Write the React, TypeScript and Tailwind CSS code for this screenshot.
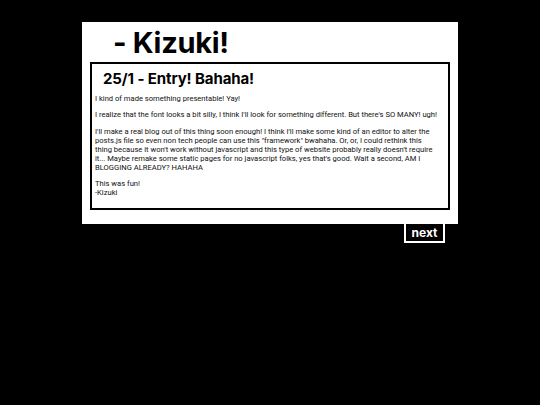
export default function App() {
  return (
    <div className="min-h-[405px] bg-black pt-[22px]" style={{ fontFamily: 'Roboto, "Liberation Sans", sans-serif' }}>
      <div className="mx-auto w-[376px]">
        <main className="bg-white pb-[14px]">
          <header className="flex h-[40px] items-center pl-[31px] pt-[1px]">
            <h1 className="font-['Inter',sans-serif] text-[29px] font-bold leading-none tracking-[-0.3px] text-black">- Kizuki!</h1>
          </header>
          <article className="ml-[8px] w-[360px] border-2 border-black pl-[3px] pr-[8px] pb-[11px] pt-[4px] text-black">
            <h2 className="pl-[8px] font-['Inter',sans-serif] text-[15px] font-bold leading-[22px] tracking-[-0.1px]">25/1 - Entry! Bahaha!</h2>
            <div className="mt-[4px] flex flex-col gap-[7px] text-[7.6px] leading-[9px] text-[#111]">
              <p>I kind of made something presentable! Yay!</p>
              <p>I realize that the font looks a bit silly, I think I'll look for something different. But there's SO MANY! ugh!</p>
              <p className="mt-[1px]">
                I'll make a real blog out of this thing soon enough! I think I'll make some kind of an editor to alter the posts.js file so even non tech people can use this "framework" bwahaha. Or, or, I could rethink this thing because it won't work without javascript and this type of website probably really doesn't require it... Maybe remake some static pages for no javascript folks, yes that's good. Wait a second, AM I BLOGGING ALREADY? HAHAHA
              </p>
              <p>
                This was fun!
                <br />
                -Kizuki
              </p>
            </div>
          </article>
        </main>
        <div className="flex justify-end pr-[13px]">
          <button className="h-[19px] w-[41px] border-2 border-t-0 border-white bg-black font-['Inter',sans-serif] text-[12px] font-bold leading-none text-white">
            next
          </button>
        </div>
      </div>
    </div>
  );
}
